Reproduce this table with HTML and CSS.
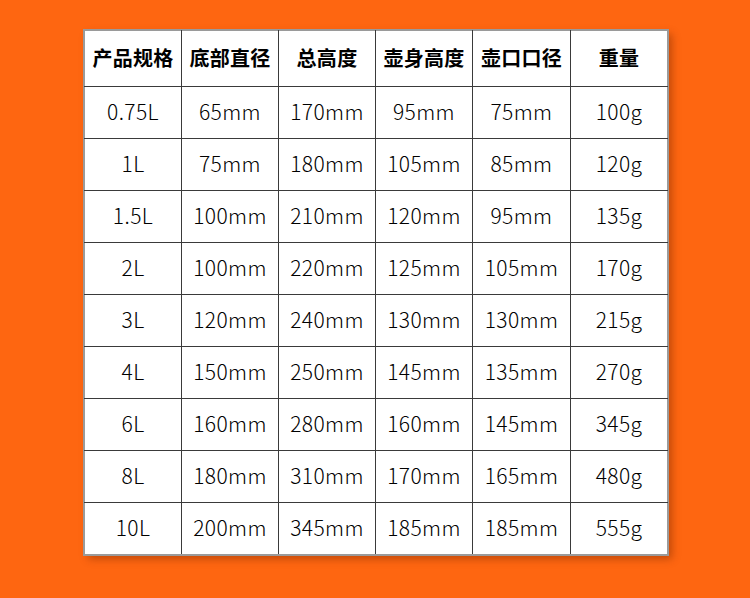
FILE: index.html
```html
<!DOCTYPE html>
<html lang="zh">
<head>
<meta charset="utf-8">
<link rel="stylesheet" href="styles.css">
</head>
<body>
<div class="page">
  <table class="spec">
    <colgroup>
      <col class="c"><col class="c"><col class="c"><col class="c"><col class="c5"><col class="c">
    </colgroup>
    <thead>
      <tr><th>产品规格</th><th>底部直径</th><th>总高度</th><th>壶身高度</th><th>壶口口径</th><th>重量</th></tr>
    </thead>
    <tbody>
      <tr><td>0.75L</td><td>65mm</td><td>170mm</td><td>95mm</td><td>75mm</td><td>100g</td></tr>
      <tr><td>1L</td><td>75mm</td><td>180mm</td><td>105mm</td><td>85mm</td><td>120g</td></tr>
      <tr><td>1.5L</td><td>100mm</td><td>210mm</td><td>120mm</td><td>95mm</td><td>135g</td></tr>
      <tr><td>2L</td><td>100mm</td><td>220mm</td><td>125mm</td><td>105mm</td><td>170g</td></tr>
      <tr><td>3L</td><td>120mm</td><td>240mm</td><td>130mm</td><td>130mm</td><td>215g</td></tr>
      <tr><td>4L</td><td>150mm</td><td>250mm</td><td>145mm</td><td>135mm</td><td>270g</td></tr>
      <tr><td>6L</td><td>160mm</td><td>280mm</td><td>160mm</td><td>145mm</td><td>345g</td></tr>
      <tr><td>8L</td><td>180mm</td><td>310mm</td><td>170mm</td><td>165mm</td><td>480g</td></tr>
      <tr><td>10L</td><td>200mm</td><td>345mm</td><td>185mm</td><td>185mm</td><td>555g</td></tr>
    </tbody>
  </table>
</div>
</body>
</html>
```
FILE: styles.css
```css
html, body {
  margin: 0;
  padding: 0;
}
body {
  background: #fe6611;
  font-family: "Noto Sans CJK SC", "Noto Sans", sans-serif;
  color: #000;
}
.page {
  width: 750px;
  height: 598px;
  box-sizing: border-box;
  padding: 30px 0 0 84px;
}
.spec {
  border-collapse: collapse;
  table-layout: fixed;
  width: 583px;
  background: #fff;
  outline: 1px solid #9a9a9a;
  box-shadow: 4px 4px 8px rgba(120, 40, 0, 0.45);
}
.c { width: 97px; }
.c5 { width: 98px; }
.spec th, .spec td {
  border: 1px solid #3a3a3a;
  text-align: center;
  white-space: nowrap;
  overflow: hidden;
}
.spec tr:first-child th, .spec tr:first-child td { border-top-color: #9a9a9a; }
.spec th:first-child, .spec td:first-child { border-left-color: #9a9a9a; }
.spec th:last-child, .spec td:last-child { border-right-color: #9a9a9a; }
.spec tbody tr:last-child td { border-bottom-color: #9a9a9a; }
.spec th {
  height: 52px;
  padding: 0 0 3px 0;
  font-size: 20px;
  font-weight: 700;
  letter-spacing: 0.3px;
}
.spec td {
  height: 47px;
  padding: 0 0 4px 0;
  font-size: 21px;
  font-weight: 300;
  letter-spacing: 0.4px;
}
```
